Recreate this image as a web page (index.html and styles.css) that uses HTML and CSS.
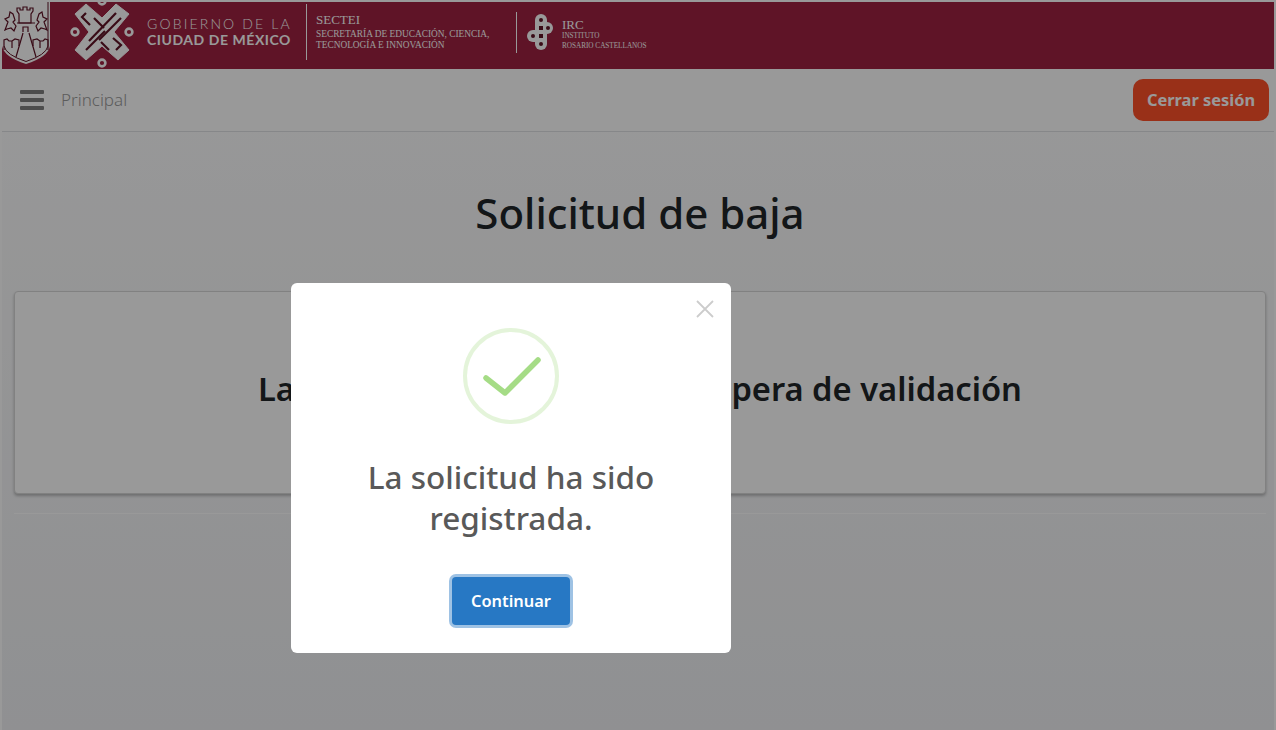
FILE: index.html
```html
<!DOCTYPE html>
<html lang="es">
<head>
    <meta charset="UTF-8">
    <meta name="viewport" content="width=device-width, initial-scale=1.0">
    <title>Solicitud de baja</title>
    <link rel="stylesheet" href="styles.css">
</head>
<body>
    <div class="page">
        <header class="gov-header">
            <svg class="shield" viewBox="0 0 48 62" aria-hidden="true">
                <path d="M0 0V44Q2 55 24 62Q46 55 48 44V0Z" fill="#fff"/>
                <path d="M2 44Q4 53 24 59.5Q44 53 46 44V0" fill="none" stroke="#5f1326" stroke-width="1"/>
                <g fill="none" stroke="#5f1326" stroke-width="1.2">
                    <path d="M15 9V6h3v2h3V5h4v3h3V6h3v3l-2 3v9h-12v-9z"/>
                    <path d="M15 21h18M21 30v-5h5v5"/>
                    <path d="M21 31L14 55M27 31l7 24"/>
                    <path d="M3 28l3-8-3-3 4-2 1-5 3 2 2 6-2 2 3 4-2 5-3-3-4 1zM45 28l-3-8 3-3-4-2-1-5-3 2-2 6 2 2-3 4 2 5 3-3 4 1z"/>
                    <path d="M2 48V38l3-1 2 2h3v7M10 39l3-2 4 1v6"/>
                    <path d="M46 48V38l-3-1-2 2h-3v7M38 39l-3-2-4 1v6"/>
                </g>
            </svg>
            <svg class="knot" viewBox="70 0 64 68" aria-hidden="true">
                <path d="M75 14L86 4L102 18L116 4L129 14L114 32L129 50L118 60L102 46L86 60L75 50L89 32Z" fill="#fff" stroke="#fff" stroke-linejoin="round" stroke-width="1"/>
                <g fill="none" stroke="#5f1326" stroke-width="2.2">
                    <path d="M86 13L82 17L90 25"/>
                    <path d="M116 13L89 41"/>
                    <path d="M121 18L99 40"/>
                    <path d="M94 18L104 28"/>
                    <path d="M116 50L121 45L113 38"/>
                    <path d="M109 50L101 42"/>
                    <path d="M86 50L105 31"/>
                </g>
                <g fill="none" stroke="#fff" stroke-width="2.6">
                    <circle cx="75" cy="32" r="3.4"/>
                    <circle cx="129" cy="32" r="3.4"/>
                    <circle cx="102" cy="63" r="3.4"/>
                    <circle cx="102" cy="1" r="3.4"/>
                </g>
            </svg>
            <div class="gov-name">
                <span class="gov-light">GOBIERNO DE LA</span>
                <span class="gov-bold">CIUDAD DE MÉXICO</span>
            </div>
            <div class="sectei">
                <span class="sectei-name">SECTEI</span>
                <span>SECRETARÍA DE EDUCACIÓN, CIENCIA,</span>
                <span>TECNOLOGÍA E INNOVACIÓN</span>
            </div>
            <div class="irc">
                <svg class="irc-logo" viewBox="0 0 30 40" aria-hidden="true">
                    <g fill="none" stroke="#fff" stroke-width="12" stroke-linecap="round">
                        <path d="M15 7V31"/>
                        <path d="M15 15H21"/>
                        <path d="M7 23H15"/>
                    </g>
                    <g fill="#5f1326">
                        <circle cx="15" cy="7" r="2"/>
                        <rect x="13" y="13" width="4" height="4"/>
                        <circle cx="22" cy="15" r="2"/>
                        <circle cx="7" cy="23" r="2"/>
                        <rect x="13" y="21" width="4" height="4"/>
                        <circle cx="15" cy="31" r="2"/>
                    </g>
                </svg>
                <div class="irc-text">
                    <span class="irc-name">IRC</span>
                    <span>INSTITUTO</span>
                    <span>ROSARIO CASTELLANOS</span>
                </div>
            </div>
        </header>

        <nav class="top-nav">
            <div class="nav-left">
                <span class="burger"><i></i><i></i><i></i></span>
                <a class="nav-link">Principal</a>
            </div>
            <button class="btn-logout">Cerrar sesión</button>
        </nav>

        <main class="content">
            <h1>Solicitud de baja</h1>
            <div class="status-wrap">
                <div class="status-card">
                    <h2>La solicitud de baja está en espera de validación</h2>
                </div>
            </div>
        </main>
    </div>

    <!-- Success popup -->
    <div class="overlay">
        <div class="popup">
            <svg class="popup-close" viewBox="0 0 18 18" aria-hidden="true">
                <path d="M1 1L17 17M17 1L1 17" stroke="#ccc" stroke-width="1.8"/>
            </svg>
            <div class="success-icon">
                <svg viewBox="0 0 96 96" aria-hidden="true">
                    <path d="M23 50L42 65L75 32" fill="none" stroke="#a5dc86" stroke-width="5.5" stroke-linecap="round" stroke-linejoin="round"/>
                </svg>
            </div>
            <h2 class="popup-title">La solicitud ha sido registrada.</h2>
            <button class="btn-confirm">Continuar</button>
        </div>
    </div>
</body>
</html>
```

FILE: styles.css
```css
* {
    box-sizing: border-box;
}

html, body {
    margin: 0;
    height: 100%;
}

body {
    font-family: "Noto Sans", "Open Sans", sans-serif;
    color: #212529;
    overflow: hidden;
}

.page {
    height: 730px;
    border: 2px solid #fff;
    border-bottom: 0;
    background: linear-gradient(#fff, #f0f1f4);
    display: flex;
    flex-direction: column;
}

/* header */
.gov-header {
    height: 67px;
    flex: none;
    background: #9f2241;
    color: #fff;
    display: flex;
    align-items: flex-start;
    overflow: hidden;
}

.shield {
    width: 48px;
    height: 62px;
    flex: none;
}

.knot {
    width: 64px;
    height: 68px;
    margin: -2px 0 0 20px;
    flex: none;
}

.gov-name {
    width: 159px;
    margin: 14px 0 0 13px;
    display: flex;
    flex-direction: column;
    font-family: Lato, sans-serif;
    font-size: 14px;
    line-height: 16px;
}

.gov-light {
    font-weight: 300;
    letter-spacing: 2.15px;
}

.gov-bold {
    font-weight: 700;
    letter-spacing: 0.55px;
}

.sectei {
    width: 210px;
    height: 56px;
    margin-top: 2px;
    padding: 8px 0 0 9px;
    border-left: 1px solid #fff;
    display: flex;
    flex-direction: column;
    font-family: "Liberation Serif", serif;
    font-size: 9.35px;
    line-height: 11px;
}

.sectei-name {
    font-size: 13px;
    line-height: 15px;
    margin-bottom: 2px;
}

.irc {
    height: 41px;
    margin-top: 10px;
    padding-left: 9px;
    border-left: 1px solid #fff;
    display: flex;
    align-items: center;
    gap: 6px;
}

.irc-logo {
    width: 30px;
    height: 40px;
}

.irc-text {
    display: flex;
    flex-direction: column;
    padding-top: 3px;
    font-family: "Liberation Serif", serif;
    font-size: 7.2px;
    line-height: 10px;
}

.irc-name {
    font-size: 13px;
    line-height: 13px;
}

/* nav */
.top-nav {
    height: 63px;
    flex: none;
    padding: 0 5px 0 18px;
    background: #fff;
    border-bottom: 1px solid #dfe1e4;
    display: flex;
    align-items: center;
    justify-content: space-between;
}

.nav-left {
    display: flex;
    align-items: center;
    gap: 17px;
}

.burger {
    width: 24px;
    display: flex;
    flex-direction: column;
    gap: 4px;
}

.burger i {
    height: 4px;
    background: #808080;
    border-radius: 1px;
}

.nav-link {
    margin-bottom: 2px;
    font-size: 17px;
    font-weight: 300;
    color: #9a9a9a;
}

.btn-logout {
    width: 136px;
    height: 42px;
    padding: 0 0 2px;
    background: #ff5028;
    color: #fff;
    border: 0;
    border-radius: 10px;
    font-family: inherit;
    font-size: 16.4px;
    font-weight: 700;
}

/* content */
.content {
    padding: 0 8px 0 12px;
}

.content h1 {
    margin: 51px 0 48px;
    height: 60px;
    text-align: center;
    font-size: 42px;
    font-weight: 500;
    line-height: 60px;
}

.status-wrap {
    height: 223px;
    border-bottom: 1px solid #fff;
}

.status-card {
    height: 203px;
    background: #fff;
    border: 1px solid #d8d8d8;
    border-radius: 4px;
    box-shadow: 0 2px 3px rgba(0, 0, 0, 0.25);
    padding-top: 73px;
}

.status-card h2 {
    margin: 0;
    text-align: center;
    font-size: 32.7px;
    font-weight: 600;
    line-height: 48px;
}

/* popup */
.overlay {
    position: fixed;
    inset: 0;
    background: rgba(0, 0, 0, 0.4);
}

.popup {
    position: absolute;
    left: 291px;
    top: 283px;
    width: 440px;
    height: 370px;
    background: #fff;
    border-radius: 6px;
    display: flex;
    flex-direction: column;
    align-items: center;
    padding-top: 45px;
}

.popup-close {
    position: absolute;
    right: 17px;
    top: 17px;
    width: 18px;
    height: 18px;
}

.success-icon {
    width: 96px;
    height: 96px;
    border: 4px solid rgba(165, 220, 134, 0.3);
    border-radius: 50%;
    flex: none;
}

.success-icon svg {
    display: block;
    width: 96px;
    height: 96px;
    margin: -4px;
}

.popup-title {
    width: 320px;
    margin: 32px 0 0;
    text-align: center;
    font-size: 31.5px;
    font-weight: 500;
    line-height: 41px;
    color: #595959;
}

.btn-confirm {
    width: 118px;
    height: 48px;
    margin-top: 39px;
    padding: 0 0 2px;
    background: #2778c4;
    color: #fff;
    border: 0;
    border-radius: 4px;
    box-shadow: 0 0 0 3px rgba(39, 120, 196, 0.45);
    font-family: inherit;
    font-size: 16.4px;
    font-weight: 600;
}
```
